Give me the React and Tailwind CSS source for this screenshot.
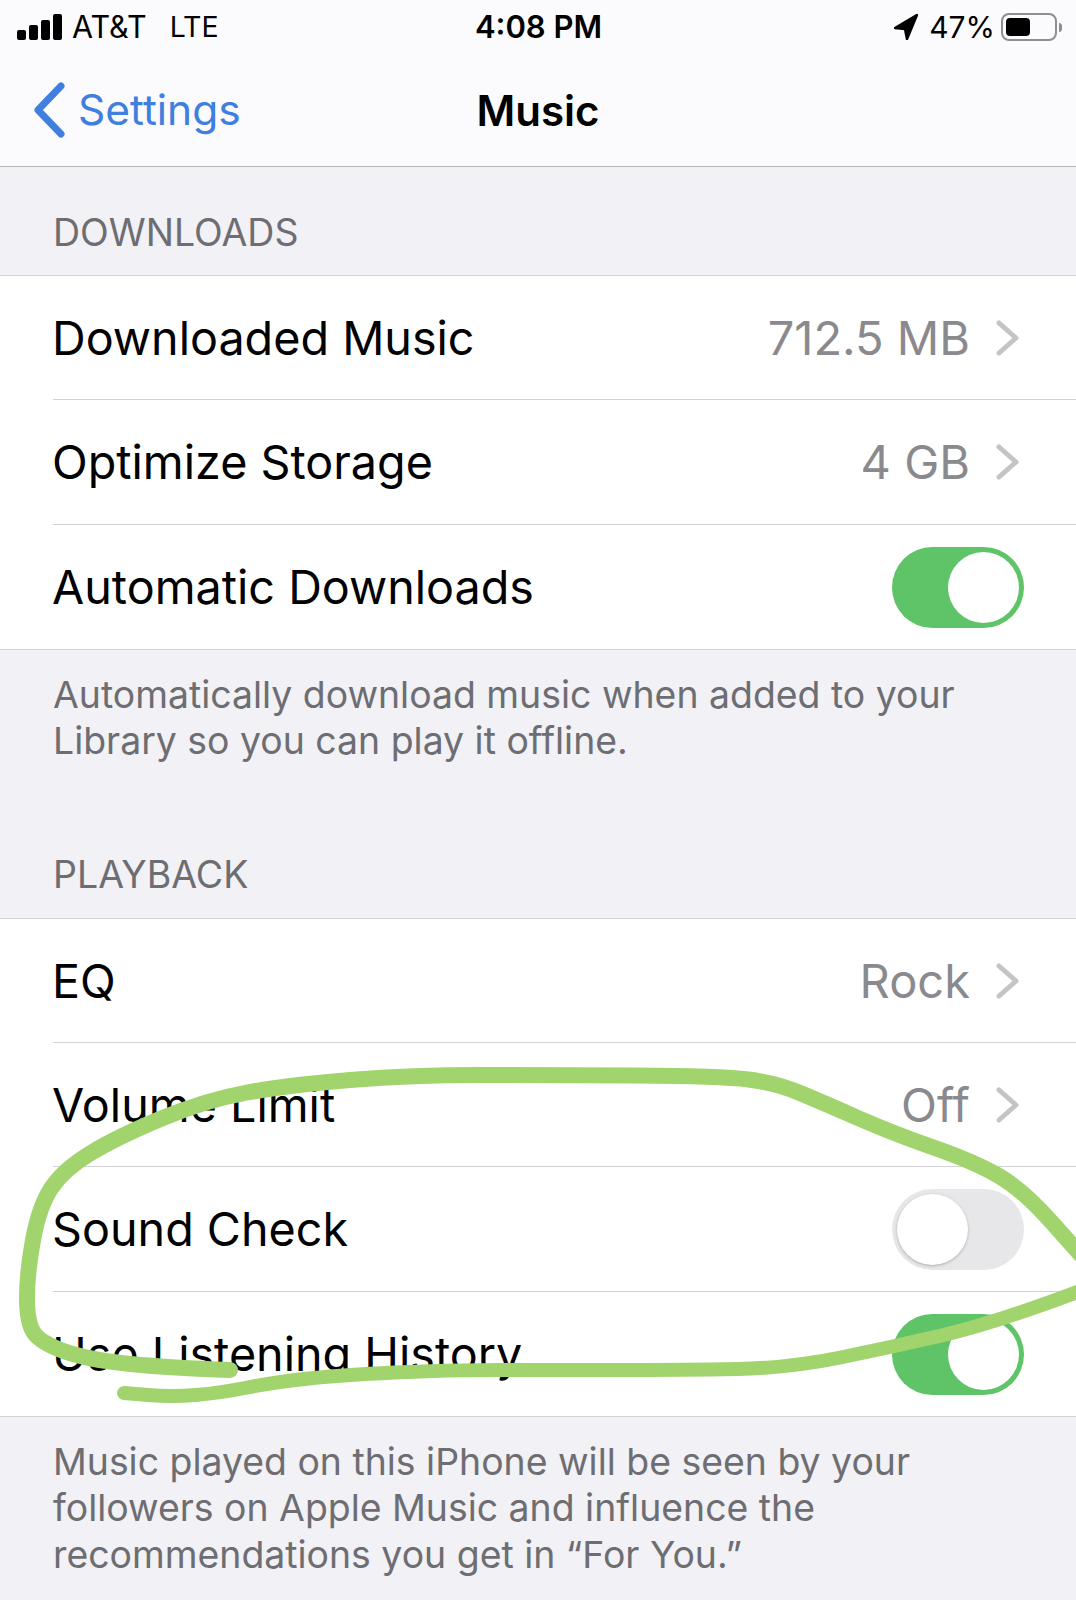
import React from 'react';

const font = { fontFamily: 'Inter, "Noto Sans", sans-serif' };

// hand drawn marker stroke, points traced off the screenshot
const strokeA = [[230,1370],[172,1368],[89,1360],[41,1343],[27,1323],[27,1273],[39,1207],[63,1170],[117,1137],[206,1100],[288,1085],[412,1075],[549,1075],[721,1076],[776,1083],[824,1103],[892,1133],[975,1162],[1023,1190],[1080,1254]];
const strokeB = [[1080,1291],[995,1323],[892,1347],[789,1368],[686,1370],[549,1370],[446,1370],[343,1375],[275,1382],[220,1393],[172,1397],[124,1393]];

function smooth(pts) {
  let d = `M${pts[0][0]} ${pts[0][1]}`;
  for (let i = 1; i < pts.length - 1; i++) {
    const mx = (pts[i][0] + pts[i + 1][0]) / 2;
    const my = (pts[i][1] + pts[i + 1][1]) / 2;
    d += ` Q${pts[i][0]} ${pts[i][1]} ${mx} ${my}`;
  }
  const last = pts[pts.length - 1];
  return d + ` L${last[0]} ${last[1]}`;
}

function Toggle({ on }) {
  if (on) {
    return (
      <div className="w-[132px] h-[81px] rounded-full bg-[#5fc367] flex items-center justify-end pr-[5px]">
        <div className="w-[71px] h-[71px] rounded-full bg-white" />
      </div>
    );
  }
  return (
    <div className="w-[132px] h-[81px] rounded-full bg-[#e7e7e9] flex items-center pl-[5px]">
      <div className="w-[71px] h-[71px] rounded-full bg-white shadow-[0_1px_3px_rgba(0,0,0,0.25)]" />
    </div>
  );
}

function Chevron() {
  return (
    <svg width="24" height="36" viewBox="0 0 24 36" fill="none" className="ml-[26px] mr-[4px]">
      <path d="M3 3 L20 18 L3 33" stroke="#c4c4c7" strokeWidth="5" strokeLinecap="round" strokeLinejoin="round" />
    </svg>
  );
}

function Row({ label, value, toggle, last }) {
  return (
    <div className="pl-[53px]">
      <div className={`h-[124.25px] pt-[1px] pr-[52px] flex items-center justify-between ${last ? '' : 'border-b border-[#d2d2d6]'}`}>
        <span className="text-[46.7px] text-black -ml-[1px]">{label}</span>
        {toggle === undefined ? (
          <div className="flex items-center">
            <span className="text-[47px] text-[#8a8a8e]">{value}</span>
            <Chevron />
          </div>
        ) : (
          <Toggle on={toggle} />
        )}
      </div>
    </div>
  );
}

function Group({ children }) {
  return <div className="bg-white border-y border-[#d2d2d6]">{children}</div>;
}

function StatusBar() {
  return (
    <div className="h-[54px] pl-[17px] pr-[14px] grid grid-cols-[1fr_auto_1fr] items-center text-[30px] text-black">
      <div className="flex items-center">
        <div className="flex items-end gap-[3px] h-[26px] w-[47px]">
          <div className="w-[9px] h-[10px] rounded-[2px] bg-black" />
          <div className="w-[9px] h-[15px] rounded-[2px] bg-black" />
          <div className="w-[9px] h-[20px] rounded-[2px] bg-black" />
          <div className="w-[9px] h-[26px] rounded-[2px] bg-black" />
        </div>
        <span className="ml-[8px] text-[30.5px]">AT&amp;T</span>
        <span className="ml-[23px] text-[28.5px]">LTE</span>
      </div>
      <div className="text-[31px] font-semibold -ml-[2px]">4:08 PM</div>
      <div className="flex items-center justify-end">
        <svg width="24" height="26" viewBox="0 0 24 26">
          <path d="M23 1 L1 14 L11 15 L13 25 Z" fill="#000" stroke="#000" strokeWidth="2.5" strokeLinejoin="round" />
        </svg>
        <span className="ml-[11px]">47%</span>
        <div className="ml-[6px] w-[56px] h-[28px] rounded-[8px] border-2 border-[#8f8f92] p-[3px]">
          <div className="w-[24px] h-full rounded-[4px] bg-black" />
        </div>
        <div className="ml-[2px] w-[3px] h-[9px] rounded-r-full bg-[#8f8f92]" />
      </div>
    </div>
  );
}

export default function App() {
  return (
    <div className="relative h-[1600px] overflow-hidden bg-[#f1f1f6]" style={font}>
      <div className="bg-[#fbfbfd] border-b border-[#b6b6ba]">
        <StatusBar />
        <div className="h-[112px] px-[33px] grid grid-cols-[1fr_auto_1fr] items-center">
          <div className="flex items-center">
            <svg width="33" height="56" viewBox="0 0 33 56" fill="none">
              <path d="M28 4 L5 28 L28 52" stroke="#3f7fe0" strokeWidth="7" strokeLinecap="round" strokeLinejoin="round" />
            </svg>
            <span className="ml-[12px] text-[42.5px] text-[#3f7fe0]">Settings</span>
          </div>
          <div className="text-[42px] font-semibold text-black">Music</div>
        </div>
      </div>

      <div className="h-[108px] pl-[53px] pb-[14px] flex items-end text-[37.5px] text-[#6d6d72]">DOWNLOADS</div>
      <Group>
        <Row label="Downloaded Music" value="712.5 MB" />
        <Row label="Optimize Storage" value="4 GB" />
        <Row label="Automatic Downloads" toggle={true} last />
      </Group>
      <div className="pt-[22px] pl-[53px] pr-[40px] text-[37.4px] leading-[46.5px] text-[#6d6d72]">
        Automatically download music when added to your<br />Library so you can play it offline.
      </div>

      <div className="h-[153px] pl-[53px] pb-[15px] flex items-end text-[37.5px] text-[#6d6d72]">PLAYBACK</div>
      <Group>
        <Row label="EQ" value="Rock" />
        <Row label="Volume Limit" value="Off" />
        <Row label="Sound Check" toggle={false} />
        <Row label="Use Listening History" toggle={true} last />
      </Group>
      <div className="pt-[22px] pl-[53px] pr-[40px] text-[37.4px] leading-[46.5px] text-[#6d6d72]">
        Music played on this iPhone will be seen by your<br />followers on Apple Music and influence the<br />recommendations you get in “For You.”
      </div>

      <svg className="absolute inset-0" width="1076" height="1600" viewBox="0 0 1076 1600" fill="none">
        <path d={smooth(strokeA)} stroke="#a2d46d" strokeWidth="16" strokeLinecap="round" strokeLinejoin="round" />
        <path d={smooth(strokeB)} stroke="#a2d46d" strokeWidth="14" strokeLinecap="round" strokeLinejoin="round" />
      </svg>
    </div>
  );
}
